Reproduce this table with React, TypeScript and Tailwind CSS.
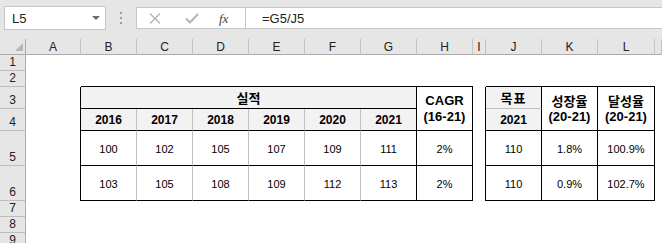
import React from 'react';

// 엑셀 시트 캡처 재현: 수식 입력줄 + 열/행 머리글 + 실적 표

const COLS = 'grid grid-cols-[26px_55px_56px_56px_56px_56px_56px_56px_56px_13px_56px_56px_57px_1fr]';
const LETTERS = ['A', 'B', 'C', 'D', 'E', 'F', 'G', 'H', 'I', 'J', 'K', 'L', ''];
const ROW_LABELS = [
  { n: 1, cls: 'row-start-1' },
  { n: 2, cls: 'row-start-2' },
  { n: 3, cls: 'row-start-3' },
  { n: 4, cls: 'row-start-4' },
  { n: 5, cls: 'row-start-5' },
  { n: 6, cls: 'row-start-6' },
  { n: 7, cls: 'row-start-7' },
  { n: 8, cls: 'row-start-8' },
  { n: 9, cls: 'row-start-9' },
];

const years = ['2016', '2017', '2018', '2019', '2020', '2021'];
const yearCols = ['col-start-3', 'col-start-4', 'col-start-5', 'col-start-6', 'col-start-7', 'col-start-8'];

const rows = [
  { rowCls: 'row-start-5', values: ['100', '102', '105', '107', '109', '111'], cagr: '2%', target: '110', growth: '1.8%', achieve: '100.9%' },
  { rowCls: 'row-start-6', values: ['103', '105', '108', '109', '112', '113'], cagr: '2%', target: '110', growth: '0.9%', achieve: '102.7%' },
];

const kr = "font-['Noto_Sans_CJK_KR',sans-serif]";

function FormulaBar() {
  return (
    <div className="flex h-[39px] items-start bg-[#e6e6e6]">
      <div className="ml-[4px] mt-[6px] flex h-[24px] w-[102px] items-center border border-[#c6c6c6] bg-white pl-[7px] pr-[5px]">
        <span className="flex-1 text-[13px] leading-none text-[#222]">L5</span>
        <svg width="8" height="5" viewBox="0 0 8 5">
          <polygon points="0,0 8,0 4,4" fill="#6b6b6b" />
        </svg>
      </div>
      <div className="flex h-[39px] w-[30px] flex-col items-center gap-[3px] pt-[12px]">
        <span className="h-[2px] w-[2px] bg-[#9c9c9c]" />
        <span className="h-[2px] w-[2px] bg-[#9c9c9c]" />
        <span className="h-[2px] w-[2px] bg-[#9c9c9c]" />
      </div>
      <div className="mt-[7px] flex h-[22px] flex-1 border border-r-0 border-[#c6c6c6] bg-white">
        <div className="flex w-[109px] items-center border-r border-[#c6c6c6]">
          <svg className="ml-[12px]" width="12" height="11" viewBox="0 0 12 11">
            <path d="M1 0.5 L11 10.5 M11 0.5 L1 10.5" stroke="#b5b5b5" strokeWidth="1.4" fill="none" />
          </svg>
          <svg className="ml-[24px]" width="14" height="11" viewBox="0 0 14 11">
            <path d="M1 5.5 L5 9.5 L13 1" stroke="#b5b5b5" strokeWidth="2" fill="none" />
          </svg>
          <span className="ml-[20px] font-['Liberation_Serif',serif] text-[13px] italic leading-none text-[#444]">fx</span>
        </div>
        <div className="flex items-center pl-[16px] text-[13px] leading-none text-[#222]">=G5/J5</div>
      </div>
    </div>
  );
}

function ColumnHeader() {
  return (
    <div className={`${COLS} h-[16px] bg-[#e6e6e6]`}>
      <div className="flex items-end justify-end border-r border-b border-[#ababab] pb-[3px] pr-[2px]">
        <svg width="8" height="8" viewBox="0 0 8 8">
          <polygon points="8,0 8,8 0,8" fill="#b8b8b8" />
        </svg>
      </div>
      {LETTERS.map((l, i) => (
        <div
          key={i}
          className="flex items-center justify-center border-r border-b border-r-[#c3c3c3] border-b-[#ababab] text-[12px] leading-none text-[#222]"
        >
          {l}
        </div>
      ))}
    </div>
  );
}

export default function App() {
  return (
    <div className="h-[243px] w-[662px] overflow-hidden bg-white font-['Liberation_Sans',sans-serif]">
      <FormulaBar />
      <ColumnHeader />
      <div className={`${COLS} grid-rows-[16px_16px_22px_22px_35px_35px_16px_16px_16px]`}>
        {/* 행 머리글 */}
        {ROW_LABELS.map((r) => (
          <div
            key={r.n}
            className={`col-start-1 ${r.cls} flex items-end justify-center border-r border-b border-r-[#ababab] border-b-[#bdbdbd] bg-[#e6e6e6] pb-[2px] text-[12px] leading-none text-[#222]`}
          >
            {r.n}
          </div>
        ))}

        {/* 표 바깥 테두리 (윗줄/왼쪽) */}
        <div className="col-start-3 col-span-7 row-start-2 border-b border-black" />
        <div className="col-start-11 col-span-3 row-start-2 border-b border-black" />
        <div className="col-start-2 row-start-3 row-span-4 border-r border-black" />
        <div className="col-start-10 row-start-3 row-span-4 border-r border-black" />

        {/* 실적 표 머리글 */}
        <div className={`col-start-3 col-span-6 row-start-3 flex items-center justify-center border-r border-b border-black bg-[#f2f2f2] text-[13px] font-bold leading-none text-black ${kr}`}>
          실적
        </div>
        <div className="col-start-9 row-start-3 row-span-2 flex flex-col items-center justify-center border-r border-b border-black text-[13px] font-bold leading-[16px] text-black">
          <span>CAGR</span>
          <span>(16-21)</span>
        </div>
        {years.map((y, i) => (
          <div
            key={y}
            className={`${yearCols[i]} row-start-4 flex items-center justify-center border-r border-b border-b-black bg-[#f2f2f2] pt-[1px] text-[12px] font-bold text-black ${i === 5 ? 'border-r-black' : 'border-r-[#bfbfbf]'}`}
          >
            {y}
          </div>
        ))}

        {/* 목표 표 머리글 */}
        <div className={`col-start-11 row-start-3 flex items-center justify-center border-r border-b border-r-black border-b-[#bfbfbf] bg-[#f2f2f2] text-[13px] font-bold leading-none tracking-[1px] text-black ${kr}`}>
          목표
        </div>
        <div className="col-start-11 row-start-4 flex items-center justify-center border-r border-b border-black bg-[#f2f2f2] pt-[1px] text-[12px] font-bold text-black">
          2021
        </div>
        <div className="col-start-12 row-start-3 row-span-2 flex flex-col items-center justify-center border-r border-b border-black text-[13px] font-bold leading-[16px] text-black">
          <span className={`${kr} leading-[16px]`}>성장율</span>
          <span className="leading-[16px]">(20-21)</span>
        </div>
        <div className="col-start-13 row-start-3 row-span-2 flex flex-col items-center justify-center border-r border-b border-black text-[13px] font-bold leading-[16px] text-black">
          <span className={`${kr} leading-[16px]`}>달성율</span>
          <span className="leading-[16px]">(20-21)</span>
        </div>

        {/* 데이터 행 */}
        {rows.map((r) => (
          <React.Fragment key={r.rowCls}>
            {r.values.map((v, i) => (
              <div
                key={i}
                className={`${yearCols[i]} ${r.rowCls} flex items-center justify-center border-r border-b border-b-black pt-[2px] text-[11px] text-black ${i === 5 ? 'border-r-black' : 'border-r-[#bfbfbf]'}`}
              >
                {v}
              </div>
            ))}
            <div className={`col-start-9 ${r.rowCls} flex items-center justify-center border-r border-b border-black pt-[2px] text-[11px] text-black`}>
              {r.cagr}
            </div>
            <div className={`col-start-11 ${r.rowCls} flex items-center justify-center border-r border-b border-black pt-[2px] text-[11px] text-black`}>
              {r.target}
            </div>
            <div className={`col-start-12 ${r.rowCls} flex items-center justify-center border-r border-b border-black pt-[2px] text-[11px] text-black`}>
              {r.growth}
            </div>
            <div className={`col-start-13 ${r.rowCls} flex items-center justify-center border-r border-b border-black pt-[2px] text-[11px] text-black`}>
              {r.achieve}
            </div>
          </React.Fragment>
        ))}
      </div>
    </div>
  );
}
